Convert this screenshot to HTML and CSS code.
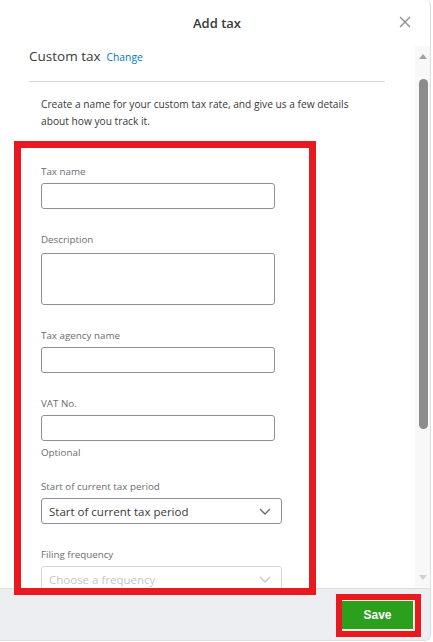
FILE: index.html
```html
<!DOCTYPE html>
<html lang="en">
<head>
    <meta charset="UTF-8">
    <meta name="viewport" content="width=device-width, initial-scale=1.0">
    <title>Add tax</title>
    <link rel="stylesheet" href="styles.css">
</head>
<body>
    <div class="dialog">
        <div class="dialog-header">
            <h1>Add tax</h1>
            <button class="close-btn" aria-label="Close">
                <svg width="12" height="12" viewBox="0 0 12 12"><path d="M1 1L11 11M11 1L1 11" stroke="#8d9096" stroke-width="1.4" fill="none"/></svg>
            </button>
        </div>

        <div class="dialog-body">
            <div class="scroll-content">
                <div class="tax-type">
                    <span class="tax-type-name">Custom tax</span>
                    <a href="#" class="link">Change</a>
                </div>
                <div class="intro">
                    <p>Create a name for your custom tax rate, and give us a few details about how you track it.</p>
                </div>

                <div class="form">
                    <div class="field">
                        <label>Tax name</label>
                        <input type="text" class="input">
                    </div>
                    <div class="field">
                        <label>Description</label>
                        <textarea class="input textarea"></textarea>
                    </div>
                    <div class="field">
                        <label>Tax agency name</label>
                        <input type="text" class="input">
                    </div>
                    <div class="field">
                        <label>VAT No.</label>
                        <input type="text" class="input">
                        <span class="hint">Optional</span>
                    </div>
                    <div class="field">
                        <label>Start of current tax period</label>
                        <div class="select">
                            <span>Start of current tax period</span>
                            <svg width="12" height="7" viewBox="0 0 12 7"><path d="M1 1L6 6L11 1" stroke="#6b6c72" stroke-width="1.4" fill="none"/></svg>
                        </div>
                    </div>
                    <div class="field">
                        <label>Filing frequency</label>
                        <div class="select select-faded">
                            <span>Choose a frequency</span>
                            <svg width="12" height="7" viewBox="0 0 12 7"><path d="M1 1L6 6L11 1" stroke="#c6c8cc" stroke-width="1.4" fill="none"/></svg>
                        </div>
                    </div>
                </div>
            </div>
            <div class="scrollbar">
                <span class="arrow-up"></span>
                <div class="thumb"></div>
                <span class="arrow-down"></span>
            </div>
        </div>

        <div class="dialog-footer">
            <button class="btn-save">Save</button>
        </div>

        <!-- highlight marks -->
        <div class="mark mark-form"></div>
        <div class="mark mark-save"></div>
    </div>
</body>
</html>
```

FILE: styles.css
```css
:root {
    --text: #393a3d;
    --label: #6b6c72;
    --border: #8d9096;
    --link: #0077c5;
    --green: #2ca01c;
    --mark: #e8191f;
}

* {
    margin: 0;
    padding: 0;
    box-sizing: border-box;
}

body {
    font-family: "Open Sans", "Noto Sans", sans-serif;
    background: #fff;
    color: var(--text);
    width: 433px;
    height: 642px;
    overflow: hidden;
}

.dialog {
    position: relative;
    width: 431px;
    height: 641px;
    background: #fff;
    border-right: 1px solid #dcdde0;
    border-bottom: 1px solid #dcdde0;
    border-radius: 0 6px 6px 0;
    display: flex;
    flex-direction: column;
    overflow: hidden;
}

.dialog-header {
    height: 46px;
    flex: none;
    display: flex;
    align-items: center;
    justify-content: center;
    position: relative;
}

.dialog-header h1 {
    font-size: 13px;
    font-weight: 600;
    margin-left: 4px;
}

.close-btn {
    position: absolute;
    right: 19px;
    top: 16px;
    border: none;
    background: none;
    width: 12px;
    height: 12px;
    display: flex;
}

.dialog-body {
    flex: 1;
    display: flex;
    min-height: 0;
}

.scroll-content {
    flex: 1;
    overflow: hidden;
    padding: 1px 0 0 29px;
}

.tax-type {
    display: flex;
    align-items: baseline;
    gap: 6px;
    height: 19px;
    padding-right: 30px;
}

.tax-type-name {
    font-size: 13.5px;
}

.link {
    font-size: 10.3px;
    color: var(--link);
    text-decoration: none;
}

.intro {
    margin-top: 15px;
    margin-right: 30px;
    border-top: 1px solid #d4d7dc;
    padding: 14px 0 0 12px;
}

.intro p {
    font-size: 10.2px;
    line-height: 17px;
    padding-right: 20px;
}

.form {
    padding: 35px 0 0 12px;
    display: flex;
    flex-direction: column;
    gap: 24px;
}

.field {
    display: flex;
    flex-direction: column;
}

.field label {
    font-size: 9.8px;
    color: var(--label);
    line-height: 13px;
    margin-bottom: 5px;
}

.input {
    width: 234px;
    height: 26px;
    border: 1px solid var(--border);
    border-radius: 3px;
    background: #fff;
    font: inherit;
}

.textarea {
    height: 52px;
    margin-top: 2px;
    resize: none;
}

.hint {
    font-size: 9.8px;
    color: var(--label);
    line-height: 13px;
    margin-top: 5px;
    margin-bottom: -3px;
}

.select {
    width: 241px;
    height: 26px;
    border: 1px solid var(--border);
    border-radius: 3px;
    display: flex;
    align-items: center;
    justify-content: space-between;
    padding: 0 10px 0 7px;
    font-size: 11.5px;
}

.select-faded {
    border-color: #d6d7da;
    color: #c6c8cc;
}

.scrollbar {
    width: 15px;
    flex: none;
    background: #f8f8f8;
    display: flex;
    flex-direction: column;
    align-items: center;
    padding: 8px 0 8px 1px;
}

.arrow-up, .arrow-down {
    width: 0;
    height: 0;
    border-left: 4px solid transparent;
    border-right: 4px solid transparent;
}

.arrow-up {
    border-bottom: 5px solid #a3a3a3;
}

.arrow-down {
    border-top: 5px solid #cfcfcf;
    margin-top: auto;
}

.thumb {
    width: 9px;
    height: 350px;
    margin-top: 20px;
    background: #8c8c8c;
    border-radius: 5px;
}

.dialog-footer {
    height: 52px;
    flex: none;
    background: #eceef1;
    border-top: 1px solid #dcdde0;
    display: flex;
    align-items: center;
    justify-content: flex-end;
    padding-right: 16px;
}

.btn-save {
    width: 73px;
    height: 30px;
    background: var(--green);
    color: #fff;
    border: 1px solid #e6f2e4;
    font-family: "Liberation Sans", sans-serif;
    font-weight: bold;
    font-size: 12px;
}

.mark {
    position: absolute;
    border: 7px solid var(--mark);
    pointer-events: none;
}

.mark-form {
    left: 14px;
    top: 141px;
    width: 302px;
    height: 454px;
}

.mark-save {
    left: 336px;
    top: 594px;
    width: 85px;
    height: 43px;
    border-width: 6px;
}
```
